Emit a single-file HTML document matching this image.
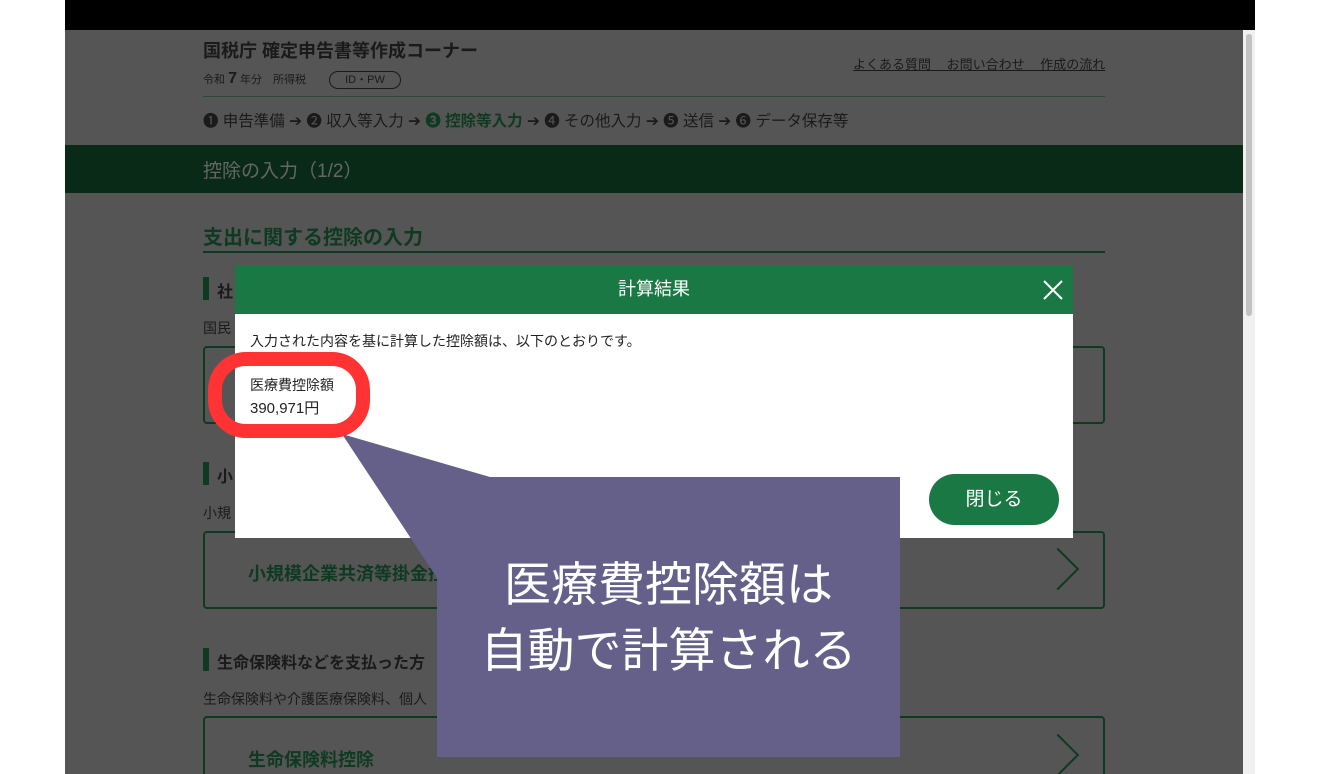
<!DOCTYPE html>
<html><head><meta charset="utf-8"><style>
*{margin:0;padding:0;box-sizing:border-box}
body{width:1320px;height:774px;overflow:hidden;background:#fff;font-family:"Liberation Sans","Noto Sans CJK JP",sans-serif;position:relative}
.abs{position:absolute}
#page{left:65px;top:0;width:1190px;height:774px;background:#555;overflow:hidden}
.t{color:#1a1a1a;white-space:nowrap}
.g{color:#0d3a20}
</style></head><body>
<div id="page" class="abs">
 <div class="abs" style="left:0;top:0;width:1190px;height:30px;background:#000"></div>
 <div class="abs t" style="left:138px;top:37px;font-size:18px;font-weight:bold">国税庁 確定申告書等作成コーナー</div>
 <div class="abs t" style="left:138px;top:70px;font-size:11px">令和 <b style="font-size:16px">7</b> 年分　所得税</div>
 <div class="abs t" style="left:264px;top:71px;width:72px;height:18px;border:1px solid #1a1a1a;border-radius:10px;font-size:11px;text-align:center;line-height:16px">ID・PW</div>
 <div class="abs t" style="left:788px;top:54px;font-size:13px;text-decoration:underline;word-spacing:12px">よくある質問 お問い合わせ 作成の流れ</div>
 <div class="abs" style="left:138px;top:96px;width:902px;height:1px;background:#2a4a35"></div>
 <div class="abs t" style="left:138px;top:109px;font-size:15.5px">❶ 申告準備 ➔ ❷ 収入等入力 ➔ <b class="g">❸ 控除等入力</b> ➔ ❹ その他入力 ➔ ❺ 送信 ➔ ❻ データ保存等</div>
 <div class="abs" style="left:0;top:145px;width:1180px;height:48px;background:#0a2a18"></div>
 <div class="abs" style="left:138px;top:156px;font-size:19px;color:#666">控除の入力（1/2）</div>
 <div class="abs t" style="left:138px;top:221px;font-size:20px;font-weight:bold;color:#0d3a20">支出に関する控除の入力</div>
 <div class="abs" style="left:138px;top:251px;width:902px;height:2px;background:#0d3a20"></div>
 <div class="abs" style="left:138px;top:277px;width:6px;height:23px;background:#0d3a20"></div>
 <div class="abs t" style="left:152px;top:278px;font-size:16px;font-weight:bold">社</div>
 <div class="abs t" style="left:138px;top:318px;font-size:14px">国民</div>
 <div class="abs" style="left:138px;top:346px;width:902px;height:78px;border:2px solid #0d3a20;border-radius:4px"></div>
 <div class="abs" style="left:138px;top:462px;width:6px;height:23px;background:#0d3a20"></div>
 <div class="abs t" style="left:152px;top:463px;font-size:16px;font-weight:bold">小</div>
 <div class="abs t" style="left:138px;top:503px;font-size:14px">小規</div>
 <div class="abs" style="left:138px;top:531px;width:902px;height:78px;border:2px solid #0d3a20;border-radius:4px"></div>
 <div class="abs" style="left:183px;top:560px;font-size:18px;font-weight:bold;color:#0d3a20">小規模企業共済等掛金控除</div>
 <div class="abs" style="left:978px;top:554px;width:30px;height:30px;border-right:2px solid #0d3a20;border-top:2px solid #0d3a20;transform:rotate(45deg)"></div>
 <div class="abs" style="left:138px;top:648px;width:6px;height:23px;background:#0d3a20"></div>
 <div class="abs t" style="left:152px;top:649px;font-size:16px;font-weight:bold">生命保険料などを支払った方</div>
 <div class="abs t" style="left:138px;top:689px;font-size:14px">生命保険料や介護医療保険料、個人</div>
 <div class="abs" style="left:138px;top:716px;width:902px;height:78px;border:2px solid #0d3a20;border-radius:4px"></div>
 <div class="abs" style="left:183px;top:746px;font-size:18px;font-weight:bold;color:#0d3a20">生命保険料控除</div>
 <div class="abs" style="left:978px;top:740px;width:30px;height:30px;border-right:2px solid #0d3a20;border-top:2px solid #0d3a20;transform:rotate(45deg)"></div>
 <div class="abs" style="left:1178px;top:30px;width:12px;height:744px;background:#f0f0f0"></div>
 <div class="abs" style="left:1181px;top:34px;width:6px;height:282px;background:#c2c2c2;border-radius:3px"></div>
</div>
<div class="abs" style="left:235px;top:265px;width:838px;height:273px;background:#fff"></div>
<div class="abs" style="left:235px;top:265px;width:838px;height:49px;background:#1a7845;color:#fff;font-size:18px;text-align:center;line-height:49px">計算結果</div>
<svg class="abs" style="left:1042px;top:279px" width="22" height="22"><path d="M2 2L20 20M20 2L2 20" stroke="#fff" stroke-width="2"/></svg>
<div class="abs t" style="left:250px;top:331px;font-size:14px;color:#222">入力された内容を基に計算した控除額は、以下のとおりです。</div>
<div class="abs t" style="left:250px;top:375px;font-size:14px;color:#222">医療費控除額</div>
<div class="abs t" style="left:250px;top:397px;font-size:15px;color:#222">390,971円</div>
<div class="abs" style="left:929px;top:474px;width:130px;height:51px;background:#1a7845;border-radius:26px;color:#fff;font-size:19px;text-align:center;line-height:51px">閉じる</div>
<svg class="abs" style="left:0;top:0" width="1320" height="774"><polygon points="342,434 490,477 900,477 900,757 437,757 437,578" fill="#646089"/></svg>
<div class="abs" style="left:208px;top:352px;width:162px;height:86px;border:14px solid #ff3333;border-radius:38px"></div>
<div class="abs" style="left:437px;top:552px;width:463px;text-align:center;color:#fff;font-size:47px;line-height:66px;white-space:nowrap">医療費控除額は<br>自動で計算される</div>
</body></html>
